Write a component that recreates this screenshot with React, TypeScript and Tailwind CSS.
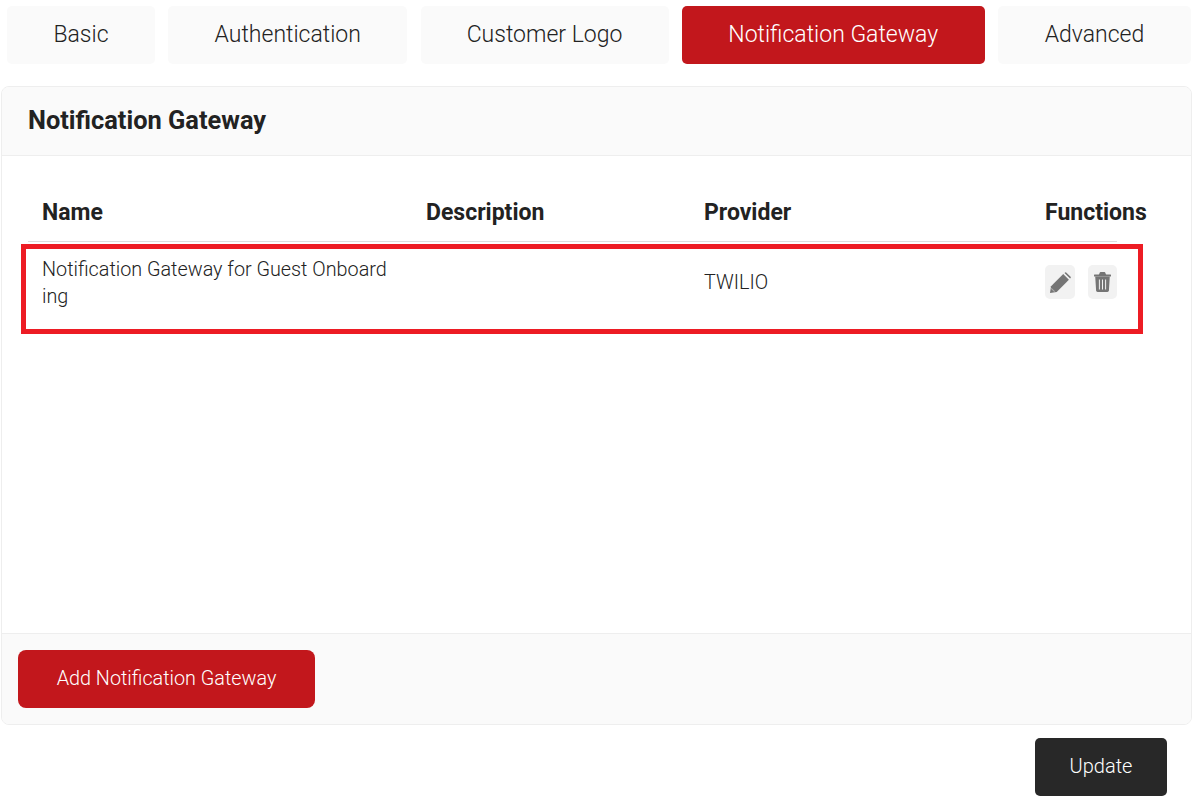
import React from 'react';

const tabs = [
  { label: 'Basic', width: 'w-[148px]' },
  { label: 'Authentication', width: 'w-[239px]' },
  { label: 'Customer Logo', width: 'w-[248px]' },
  { label: 'Notification Gateway', width: 'w-[303px]', active: true },
  { label: 'Advanced', width: 'w-[193px]' },
];

const PencilIcon = () => (
  <svg viewBox="0 0 20 20" className="w-[21px] h-[21px]" fill="currentColor">
    <path d="M0 20 L1 13.6 L12.6 2 L18 7.4 L6.4 19 Z" />
    <path d="M13.8 0.9 L14.4 0.4 Q14.9 -0.1 15.4 0.4 L19.6 4.6 Q20.1 5.1 19.6 5.6 L19.1 6.2 Z" />
    <path d="M1.2 15.6 L4.4 18.8" stroke="#f2f2f2" strokeOpacity="0.45" strokeWidth="1" fill="none" />
  </svg>
);

const TrashIcon = () => (
  <svg viewBox="0 0 17 20" className="w-[17px] h-[20px]" fill="currentColor">
    <path d="M4.8 3 L5.8 0.6 Q6 0.1 6.5 0.1 H10.5 Q11 0.1 11.2 0.6 L12.2 3 Z" />
    <rect x="0" y="2.4" width="17" height="2.2" rx="0.5" />
    <path d="M1.2 4.6 H15.8 L14.9 18.6 Q14.8 20 13.4 20 H3.6 Q2.2 20 2.1 18.6 Z" />
    <path d="M5.4 7.5 V17.5 M8.5 7.5 V17.5 M11.6 7.5 V17.5" stroke="#f2f2f2" strokeWidth="1" fill="none" />
  </svg>
);

const App: React.FC = () => {
  return (
    <div className="relative w-[1194px] h-[807px] bg-white overflow-hidden font-['Roboto',sans-serif] text-[#222222]">
      {/* Tabs */}
      <div className="flex gap-[13.25px] pt-[6px] pl-[7px]">
        {tabs.map((tab) => (
          <button
            key={tab.label}
            className={`${tab.width} h-[58px] rounded-[5px] text-[23px] font-light ${
              tab.active ? 'bg-[#c2171c] text-white' : 'bg-[#fafafa] text-[#222222]'
            }`}
          >
            {tab.label}
          </button>
        ))}
      </div>

      {/* Card */}
      <div className="mt-[22px] ml-[1px] w-[1191px] h-[639px] flex flex-col border border-[#eeeeee] rounded-[8px] overflow-hidden">
        <div className="h-[69px] shrink-0 flex items-center pl-[26px] pb-[2px] bg-[#fafafa] border-b border-[#eeeeee]">
          <h2 className="text-[25.4px] font-bold">Notification Gateway</h2>
        </div>

        <div className="flex-1 pt-[28px] pl-[26px]">
          <table className="table-fixed w-[1089px] border-collapse">
            <thead>
              <tr className="border-b border-[#dddddd] text-left text-[23px] font-bold">
                <th className="w-[384px] h-[57px] pt-[2px] pl-[14px] font-bold">Name</th>
                <th className="w-[278px] pt-[2px] pl-[14px] font-bold">Description</th>
                <th className="w-[341px] pt-[2px] pl-[14px] font-bold">Provider</th>
                <th className="w-[86px] pt-[2px] pl-[14px] font-bold whitespace-nowrap">Functions</th>
              </tr>
            </thead>
            <tbody>
              <tr className="text-[19.8px] font-light leading-[27px]">
                <td className="h-[82px] pt-[2px] pl-[14px] pr-[24px] break-all">
                  Notification Gateway for Guest Onboarding
                </td>
                <td className="pl-[14px]"></td>
                <td className="pl-[14px]">TWILIO</td>
                <td className="pl-[14px]">
                  <div className="flex gap-[13px]">
                    <span className="w-[30px] h-[34px] shrink-0 flex items-center justify-center rounded-[5px] bg-[#f2f2f2] text-[#757575]">
                      <PencilIcon />
                    </span>
                    <span className="w-[29px] h-[34px] shrink-0 flex items-center justify-center rounded-[5px] bg-[#f2f2f2] text-[#757575]">
                      <TrashIcon />
                    </span>
                  </div>
                </td>
              </tr>
            </tbody>
          </table>
        </div>

        <div className="h-[91px] shrink-0 pt-[16px] pl-[16px] bg-[#fafafa] border-t border-[#eeeeee]">
          <button className="w-[297px] h-[58px] rounded-[8px] bg-[#c2171c] text-white text-[19.8px] font-[350]">
            Add Notification Gateway
          </button>
        </div>
      </div>

      <div className="flex justify-end mt-[13px] pr-[27px]">
        <button className="w-[132px] h-[58px] pb-[2px] rounded-[5px] bg-[#282828] text-white text-[20px] font-[350]">
          Update
        </button>
      </div>

      {/* Red annotation around the row */}
      <div className="absolute left-[21px] top-[244px] w-[1122px] h-[90px] border-[5px] border-[#ed1c24]" />
    </div>
  );
};

export default App;
